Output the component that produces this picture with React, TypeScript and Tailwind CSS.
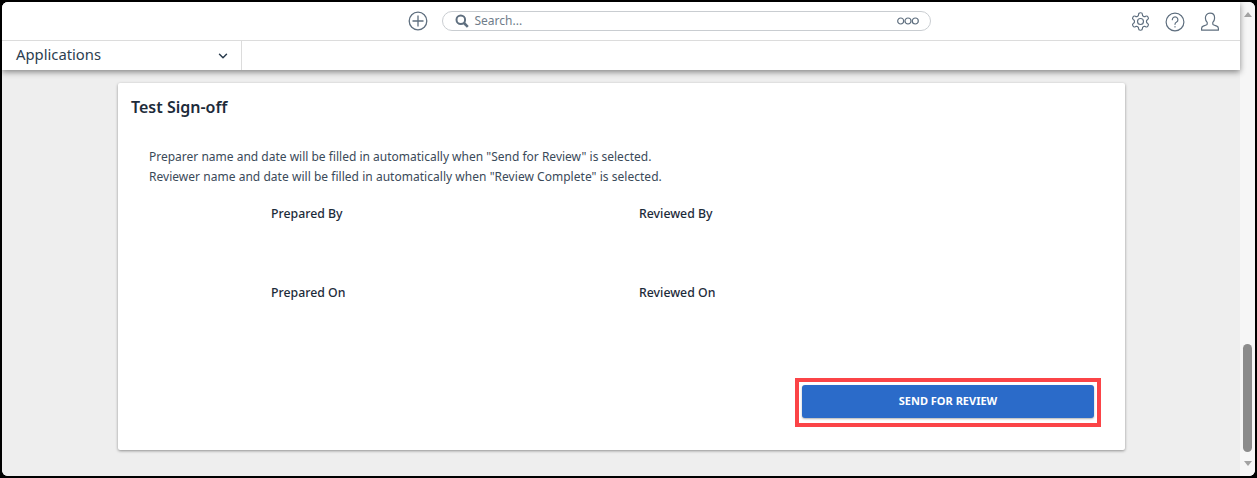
import React from "react";
import { ChevronDown } from "lucide-react";

const Plus = () => (
  <svg width="20" height="20" viewBox="0 0 20 20" fill="none" stroke="#5f6f7f" strokeWidth="1.3">
    <circle cx="10" cy="10" r="8.8" />
    <path d="M10 4.5v11M4.5 10h11" />
  </svg>
);
const Glass = () => (
  <svg width="14" height="14" viewBox="0 0 14 14" fill="none" stroke="#5f6f7f">
    <circle cx="5.8" cy="5.8" r="4.3" strokeWidth="2" />
    <path d="M9 9l3.8 3.8" strokeWidth="2.6" />
  </svg>
);
const Dots = () => (
  <svg width="22" height="8" viewBox="0 0 22 8" fill="none" stroke="#5f6f7f" strokeWidth="1.2">
    <circle cx="3.7" cy="4" r="3" />
    <circle cx="11" cy="4" r="3" />
    <circle cx="18.3" cy="4" r="3" />
  </svg>
);
const Gear = () => (
  <svg width="21" height="21" viewBox="0 0 24 24" fill="none" stroke="#5f6f7f" strokeWidth="1.35" strokeLinejoin="round">
    <path d="M12.2 2h-.44a2 2 0 0 0-2 2v.18a2 2 0 0 1-1 1.73l-.43.25a2 2 0 0 1-2 0l-.15-.08a2 2 0 0 0-2.73.73l-.22.38a2 2 0 0 0 .73 2.73l.15.1a2 2 0 0 1 1 1.72v.51a2 2 0 0 1-1 1.74l-.15.09a2 2 0 0 0-.73 2.73l.22.38a2 2 0 0 0 2.73.73l.15-.08a2 2 0 0 1 2 0l.43.25a2 2 0 0 1 1 1.73V20a2 2 0 0 0 2 2h.44a2 2 0 0 0 2-2v-.18a2 2 0 0 1 1-1.73l.43-.25a2 2 0 0 1 2 0l.15.08a2 2 0 0 0 2.73-.73l.22-.39a2 2 0 0 0-.73-2.73l-.15-.08a2 2 0 0 1-1-1.74v-.5a2 2 0 0 1 1-1.74l.15-.09a2 2 0 0 0 .73-2.73l-.22-.38a2 2 0 0 0-2.73-.73l-.15.08a2 2 0 0 1-2 0l-.43-.25a2 2 0 0 1-1-1.73V4a2 2 0 0 0-2-2z" />
    <circle cx="12" cy="12" r="3.4" />
  </svg>
);
const Help = () => (
  <svg width="20" height="20" viewBox="0 0 20 20" fill="none" stroke="#5f6f7f" strokeWidth="1.2" strokeLinecap="round">
    <circle cx="10" cy="10" r="8.9" />
    <path d="M7.3 7.7a2.8 2.8 0 1 1 4.3 2.4c-1 .6-1.6 1.1-1.6 2.2" />
    <path d="M10 14.6v.3" />
  </svg>
);
const User = () => (
  <svg width="20" height="20" viewBox="0 0 20 20" fill="none" stroke="#5f6f7f" strokeWidth="1.2" strokeLinejoin="round">
    <path d="M10 1.2c-2.9 0-4.6 2.1-4.6 4.8 0 1.8.7 3.3 1.8 4.4v1.5c0 .6-.4.9-1 1.1l-3 1.1c-1.1.4-1.6 1.2-1.6 2.3v1.8h16.8v-1.8c0-1.1-.5-1.9-1.6-2.3l-3-1.1c-.6-.2-1-.5-1-1.1v-1.5c1.1-1.1 1.8-2.6 1.8-4.4 0-2.7-1.7-4.8-4.6-4.8z" />
  </svg>
);

export default function App() {
  return (
    <div className="h-[478px] w-full overflow-hidden bg-black p-[2px] font-['Noto_Sans',sans-serif]">
      <div className="flex h-full overflow-hidden rounded-[6px] bg-white">
        <div className="flex min-w-0 flex-1 flex-col bg-[#eeeeee]">
          <div className="z-10 bg-white shadow-[0_2px_6px_rgba(0,0,0,0.45)]">
            <div className="relative flex h-[39px] items-center justify-center border-b border-[#dcdcdc]">
              <div className="flex items-center gap-[14px] pl-[96px]">
                <Plus />
                <div className="flex h-[20px] w-[489px] items-center rounded-full border border-[#c9cdd1] pl-[12px] pr-[11px]">
                  <Glass />
                  <span className="ml-[6px] text-[12px] text-[#6f7d8a]">Search...</span>
                  <span className="ml-auto">
                    <Dots />
                  </span>
                </div>
              </div>
              <div className="absolute right-[20px] top-[9px] flex items-center gap-[14px]">
                <Gear />
                <span className="mr-[1px]"><Help /></span>
                <User />
              </div>
            </div>
            <div className="flex h-[29px]">
              <div className="flex w-[240px] items-center justify-between border-r border-[#dcdcdc] pl-[14px] pr-[11px]">
                <span className="mb-[3px] text-[14.8px] leading-[20px] text-[#2c3e50]">Applications</span>
                <ChevronDown size={14} strokeWidth={2.5} className="text-[#2c3e50]" />
              </div>
            </div>
          </div>
          <div className="flex-1 pl-[116px] pr-[115px] pt-[13px]">
            <div className="flex h-[367px] flex-col rounded-[2px] bg-white shadow-[0_1px_3px_rgba(0,0,0,0.4)]">
              <h2 className="pl-[13px] pt-[14px] text-[16px] font-semibold leading-[20px] text-[#1d2b3a]">Test Sign-off</h2>
              <div className="pl-[31px] pt-[30px] text-[12px] leading-[19.5px] text-[#3b4a59]">
                <p>Preparer name and date will be filled in automatically when "Send for Review" is selected.</p>
                <p className="tracking-[0.03px]">Reviewer name and date will be filled in automatically when "Review Complete" is selected.</p>
              </div>
              <div className="grid grid-cols-[368px_1fr] grid-rows-[79px_20px] pl-[153px] pt-[18px] text-[12.3px] font-medium leading-[20px] text-[#1d2b3a]">
                <span>Prepared By</span>
                <span>Reviewed By</span>
                <span>Prepared On</span>
                <span>Reviewed On</span>
              </div>
              <div className="mt-auto flex justify-end pb-[23px] pr-[24px]">
                <div className="border-4 border-[#fb4447] px-[3px] pb-[5px] pt-[3px]">
                  <button className="block h-[33px] w-[292px] rounded-[3px] bg-[#2b6bc9] text-[11px] font-bold text-white shadow-[0_1px_2px_rgba(0,0,0,0.3)]">
                    SEND FOR REVIEW
                  </button>
                </div>
              </div>
            </div>
          </div>
        </div>
        <div className="flex w-[15px] flex-col items-center bg-[#f6f6f6] pb-[10px] pt-[10px]">
          <div className="h-0 w-0 border-x-[4px] border-b-[5px] border-x-transparent border-b-[#a3a3a3]" />
          <div className="mt-auto h-[108px] w-[9px] rounded-full bg-[#8c8c8c]" />
          <div className="mt-[9px] h-0 w-0 border-x-[4px] border-t-[5px] border-x-transparent border-t-[#a3a3a3]" />
        </div>
      </div>
    </div>
  );
}
